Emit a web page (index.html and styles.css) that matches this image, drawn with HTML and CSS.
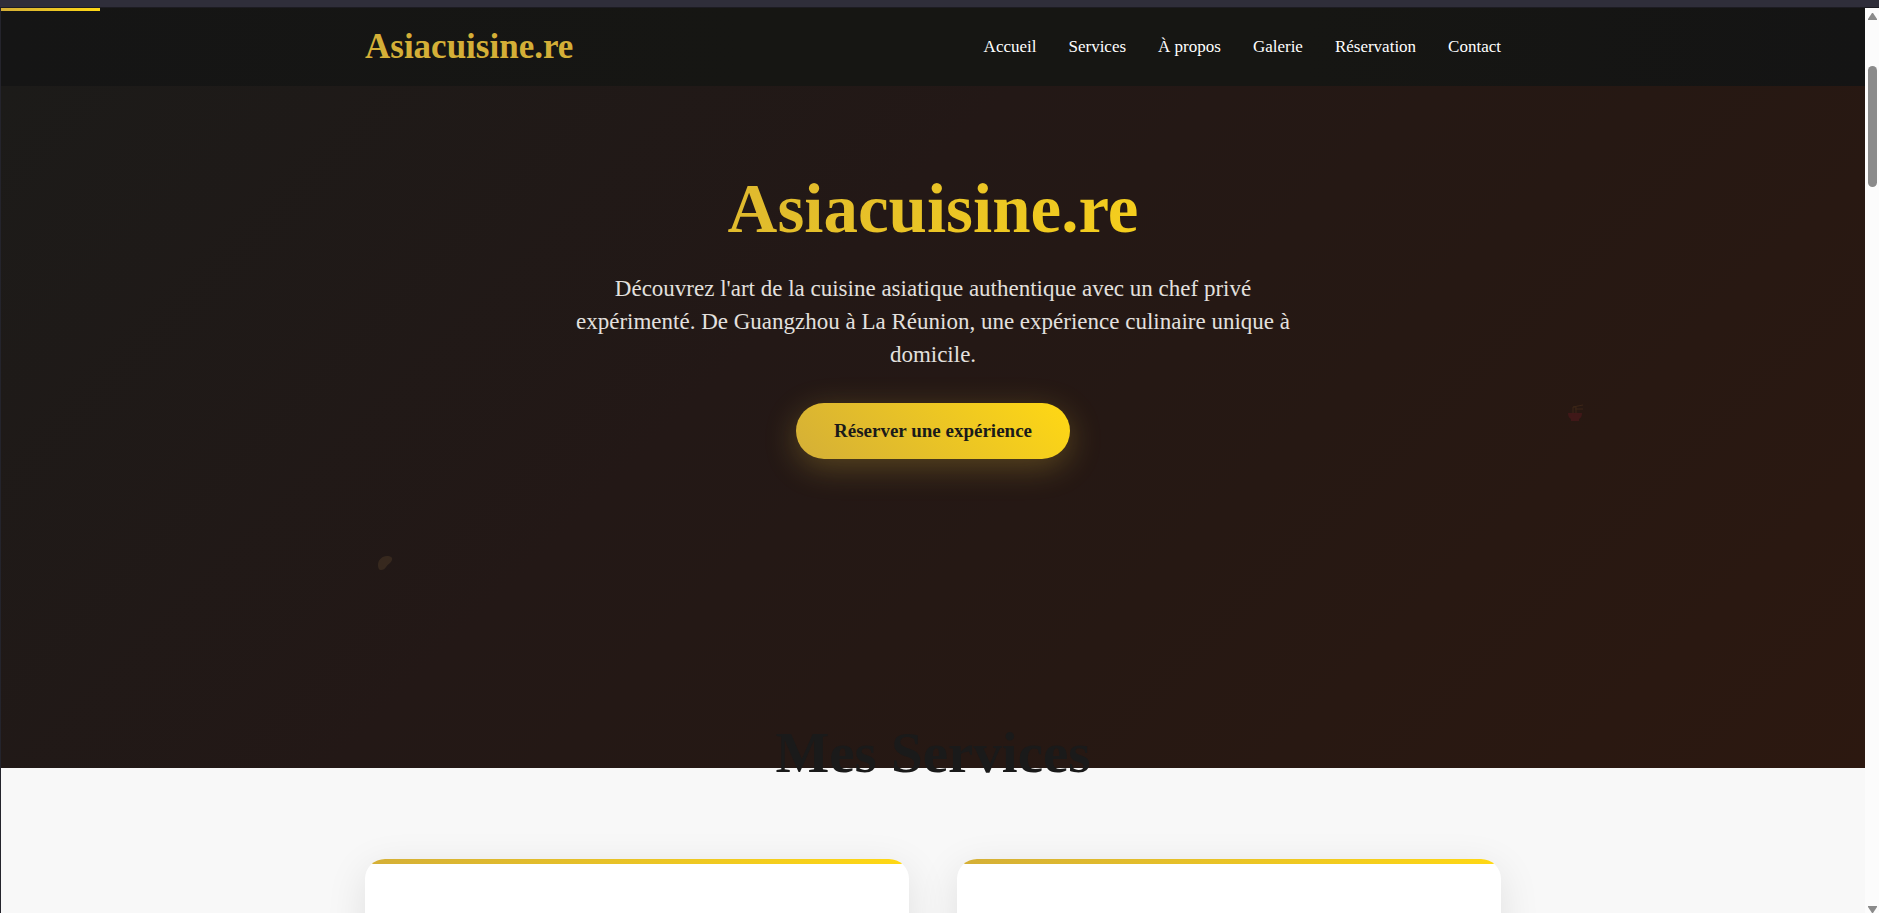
FILE: index.html
```html
<!DOCTYPE html>
<html lang="fr">
<head>
<meta charset="utf-8">
<title>Asiacuisine.re</title>
<link rel="stylesheet" href="styles.css">
</head>
<body>
<div class="window-edge"></div>
<div class="frame">
  <div class="page">
    <header class="site-header">
      <div class="progress"></div>
      <div class="container bar">
        <a class="logo" href="#">Asiacuisine.re</a>
        <nav class="menu">
          <a href="#accueil">Accueil</a>
          <a href="#services">Services</a>
          <a href="#apropos">À propos</a>
          <a href="#galerie">Galerie</a>
          <a href="#reservation">Réservation</a>
          <a href="#contact">Contact</a>
        </nav>
      </div>
    </header>
    <section class="hero" id="accueil">
      <h1>Asiacuisine.re</h1>
      <p>Découvrez l'art de la cuisine asiatique authentique avec un chef privé expérimenté. De Guangzhou à La Réunion, une expérience culinaire unique à domicile.</p>
      <a class="cta" href="#reservation">Réserver une expérience</a>
      <svg class="float leaf" viewBox="0 0 16 16" aria-hidden="true"><path d="M1 10C1 5 5 1 10 1c3 0 6 1 5 4-1 3-4 4-6 7-1 2-3 3-5 3-2 0-3-2-3-5z" fill="#8b6b3e"/></svg>
      <svg class="float bowl" viewBox="0 0 16 18" aria-hidden="true"><path d="M1 9h14c0 3-1 5-3 6v2H4v-2C2 14 1 12 1 9z" fill="#a01830"/><path d="M6 9V3h3v6M6 3l10-2M8 5h8" fill="none" stroke="#8b5a2b" stroke-width="1"/></svg>
    </section>
    <section class="services" id="services">
      <h2>Mes Services</h2>
      <div class="container cards">
        <article class="card"></article>
        <article class="card"></article>
      </div>
    </section>
  </div>
  <div class="scrollbar" aria-hidden="true">
    <svg class="arrow" viewBox="0 0 9 7"><path d="M4 0h1l4 6v1H0V6z"/></svg>
    <div class="track"><div class="thumb"></div></div>
    <svg class="arrow" viewBox="0 0 9 7"><path d="M4 7h1l4-6V0H0v1z"/></svg>
  </div>
</div>
</body>
</html>
```
FILE: styles.css
```css
* { box-sizing: border-box; }
body {
  margin: 0;
  height: 100vh;
  overflow: hidden;
  display: flex;
  flex-direction: column;
  background: #2f2e3a;
  font-family: Georgia, "Liberation Serif", serif;
}
a { color: inherit; text-decoration: none; }
.window-edge { flex: none; height: 8px; border-bottom: 1px solid #1d1c22; }
.frame {
  flex: 1;
  min-height: 0;
  display: flex;
  border-left: 1px solid #24242c;
}
.page { flex: 1; overflow: hidden; background: #f8f8f8; }
.container { width: 100%; max-width: 1200px; margin: 0 auto; padding: 0 32px; }
.site-header { position: relative; background: linear-gradient(90deg, #151515, #161613 40%, #161613 70%, #141414); }
.progress {
  position: absolute;
  top: 0;
  left: 0;
  width: 99px;
  height: 3px;
  background: linear-gradient(90deg, #d4af37, #ffd814);
}
.bar { display: flex; justify-content: space-between; align-items: center; height: 78px; }
.logo { color: #d4af37; font-size: 35px; font-weight: bold; }
.menu { display: flex; gap: 32px; color: #fff; font-size: 17px; }
.hero {
  position: relative;
  min-height: 682px;
  padding-top: 84px;
  display: flex;
  flex-direction: column;
  align-items: center;
  text-align: center;
  background: linear-gradient(135deg, #1c1b19 0%, #231816 40%, #261813 65%, #2c1810 100%);
}
.hero h1 {
  width: 100%;
  max-width: 800px;
  margin: 0 0 24px;
  font-size: 69px;
  line-height: 78px;
  background: linear-gradient(135deg, #d4af37, #ffd814);
  background-clip: text;
  -webkit-background-clip: text;
  color: transparent;
}
.hero p {
  max-width: 736px;
  margin: 0 0 32px;
  color: #e3e0df;
  font-size: 23px;
  line-height: 33px;
}
.cta {
  padding: 16px 38px;
  border-radius: 28px;
  background: linear-gradient(45deg, #d4af37, #ffd814);
  box-shadow: 0 8px 32px rgba(212, 175, 55, 0.3);
  color: #1a1a1a;
  font-size: 19px;
  font-weight: bold;
  line-height: 24px;
}
.float { position: absolute; opacity: 0.2; }
.leaf { left: 376px; top: 469px; width: 16px; height: 16px; }
.bowl { left: 84%; top: 318px; width: 16px; height: 18px; }
.services { position: relative; }
.services h2 {
  margin: -47px 0 74px;
  color: #1a1a1a;
  font-size: 57px;
  line-height: 64px;
  text-align: center;
}
.cards { display: grid; grid-template-columns: 1fr 1fr; gap: 48px; }
.card {
  height: 400px;
  overflow: hidden;
  border-radius: 20px;
  background: #fff;
  box-shadow: 0 10px 40px rgba(0, 0, 0, 0.1);
}
.card::before {
  content: "";
  display: block;
  height: 5px;
  background: linear-gradient(90deg, #d4af37, #ffd814);
}
.scrollbar {
  width: 14px;
  flex: none;
  display: flex;
  flex-direction: column;
  align-items: center;
  padding: 5px 0 0;
  background: #fcfcfc;
}
.arrow { width: 9px; height: 7px; fill: #8b8b8b; }
.track { flex: 1; padding-top: 46px; }
.thumb { width: 9px; height: 121px; border-radius: 5px; background: #8b8b8b; }
```
